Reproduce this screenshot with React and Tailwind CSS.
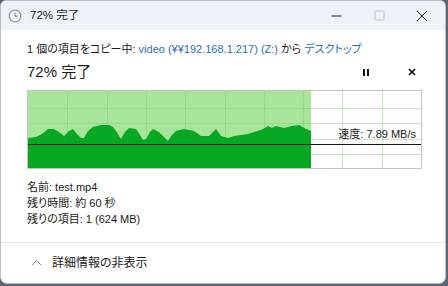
import React from 'react';

const wave = [
  [0, 47], [8, 46], [14, 43], [20, 38], [26, 38], [31, 41], [36, 45], [41, 40], [45, 38], [48, 42],
  [53, 47], [56, 47], [60, 40], [65, 36], [73, 34], [81, 34], [85, 36], [88, 40], [93, 48], [97, 41],
  [101, 37], [108, 38], [112, 44], [115, 49], [118, 48], [122, 41], [125, 38], [131, 41], [136, 46],
  [140, 50], [144, 44], [148, 40], [156, 38], [166, 40], [173, 45], [181, 45], [185, 41], [188, 38],
  [193, 45], [200, 47], [206, 45], [213, 44], [220, 43], [226, 41], [230, 40], [235, 38], [240, 35],
  [244, 37], [248, 35], [256, 37], [264, 35], [271, 34], [278, 38], [283, 40],
];

const SpeedGraph = () => {
  const done = 283;
  const top = wave.map(([x, y]) => `L${x},${y}`).join(' ');
  const cols = [39, 79, 118, 157, 197, 236, 275, 314, 354];
  const rows = [17, 32, 48, 63];

  return (
    <div className="relative h-[79px] w-[395px] border border-[#c4c4c4] bg-white">
      <svg width="393" height="77" className="block">
        <rect x="0" y="0" width={done} height="77" fill="#a6e59a" />
        {cols.map(x => (
          <line key={x} x1={x + 0.5} y1="0" x2={x + 0.5} y2="77" stroke="#7cc974" strokeOpacity="0.45" />
        ))}
        {rows.map(y => (
          <line key={y} x1="0" y1={y + 0.5} x2="393" y2={y + 0.5} stroke="#7cc974" strokeOpacity="0.45" />
        ))}
        <path d={`M0,77 ${top} L${done},77 Z`} fill="#06a823" />
        <line x1="0" y1="53.5" x2="393" y2="53.5" stroke="#111" strokeWidth="1.2" />
      </svg>
      <span className="absolute right-[5px] top-[36px] text-[11px] leading-[14px] text-[#1a1a1a]">
        速度: 7.89 MB/s
      </span>
    </div>
  );
};

const ClockIcon = () => (
  <svg width="14" height="14" viewBox="0 0 14 14">
    <circle cx="7" cy="7" r="6.5" fill="#9a9a9a" />
    <circle cx="7" cy="7" r="5.2" fill="#f3f3f3" />
    <path d="M7 3.6 V7.2 H9.4" stroke="#777" strokeWidth="1" fill="none" />
  </svg>
);

export default function App() {
  return (
    <div
      className="h-[286px] w-[448px] bg-[#5d6672] [font-family:'Liberation_Sans','Noto_Sans_CJK_JP',sans-serif] [font-feature-settings:'palt']"
    >
      <div className="flex h-[284px] w-[446px] flex-col overflow-hidden rounded-b-[7px] rounded-t-[6px] border border-[#b9bec6] bg-white">
        {/* title bar */}
        <div className="flex h-[29px] shrink-0 items-center bg-[#eef3f9] pl-[7px]">
          <ClockIcon />
          <span className="ml-[8px] text-[11.5px] text-[#1b1b1b]">72% 完了</span>
          <div className="ml-auto flex items-center">
            <div className="flex w-[46px] justify-center">
              <svg width="11" height="11" viewBox="0 0 11 11">
                <line x1="0.5" y1="6" x2="10.5" y2="6" stroke="#222" strokeWidth="1" />
              </svg>
            </div>
            <div className="flex w-[40px] justify-center">
              <svg width="11" height="11" viewBox="0 0 11 11">
                <rect x="1" y="1" width="9" height="9" rx="1" fill="none" stroke="#c4c4c4" strokeWidth="1" />
              </svg>
            </div>
            <div className="flex w-[46px] justify-center">
              <svg width="12" height="12" viewBox="0 0 12 12">
                <path d="M1 1 L11 11 M11 1 L1 11" stroke="#222" strokeWidth="1" />
              </svg>
            </div>
          </div>
        </div>

        {/* body */}
        <div className="flex flex-col pl-[26px] pr-[24px]">
          <div className="mt-[11px] text-[11px] leading-[16px] text-[#1a1a1a]">
            1 個の項目をコピー中: <span className="text-[#2a6bbf]">video (¥¥192.168.1.217) (Z:)</span> から{' '}
            <span className="text-[#2a6bbf]">デスクトップ</span>
          </div>
          <div className="mt-[5px] flex h-[20px] items-center">
            <span className="text-[15px] leading-[20px] text-[#1a1a1a]">72% 完了</span>
            <div className="ml-auto flex items-center gap-[38px] pr-[5px]">
              <svg width="8" height="9" viewBox="0 0 8 9">
                <rect x="1" y="1" width="2" height="7" fill="#111" />
                <rect x="5" y="1" width="2" height="7" fill="#111" />
              </svg>
              <svg width="8" height="8" viewBox="0 0 8 8">
                <path d="M1 1 L7 7 M7 1 L1 7" stroke="#111" strokeWidth="1.7" />
              </svg>
            </div>
          </div>
          <div className="mt-[8px]">
            <SpeedGraph />
          </div>
          <div className="mt-[10px] flex flex-col text-[11px] leading-[16px] text-[#1a1a1a]">
            <span>名前: test.mp4</span>
            <span>残り時間: 約 60 秒</span>
            <span>残りの項目: 1 (624 MB)</span>
          </div>
        </div>

        <div className="mt-[15px] h-px w-full bg-[#e3e3e3]" />

        <div className="flex h-[42px] items-center pl-[30px]">
          <svg width="11" height="7" viewBox="0 0 11 7">
            <path d="M1 6 L5.5 1.5 L10 6" stroke="#8a8a8a" strokeWidth="1" fill="none" />
          </svg>
          <span className="ml-[10px] text-[12px] text-[#1a1a1a]">詳細情報の非表示</span>
        </div>
      </div>
    </div>
  );
}
